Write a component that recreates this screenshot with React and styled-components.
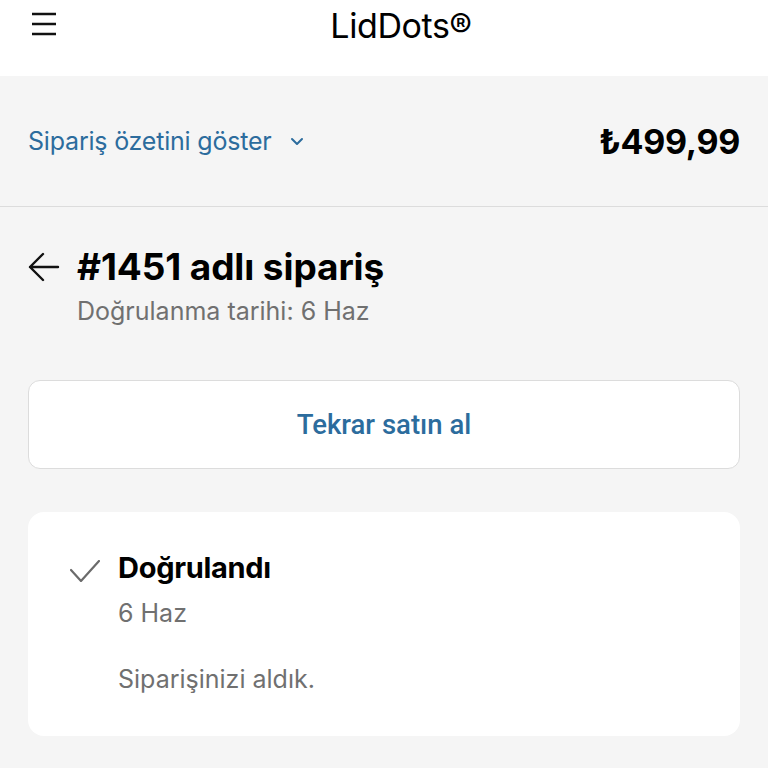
import styled, { createGlobalStyle } from 'styled-components';

const GlobalStyle = createGlobalStyle`
  html, body {
    margin: 0;
    padding: 0;
    background: #f5f5f5;
    font-family: Inter, "Noto Sans", sans-serif;
    color: #000;
  }
`;

const Header = styled.header`
  height: 76px;
  background: #fff;
  display: flex;
  align-items: flex-start;
  padding: 7px 28px 0;
  box-sizing: border-box;
`;

const Menu = styled.button`
  border: none;
  background: none;
  padding: 0;
  margin: 5px 0 0 4px;
  width: 24px;
  height: 24px;
  display: flex;
  align-items: center;
`;

const Brand = styled.div`
  flex: 1;
  text-align: center;
  font-size: 34px;
  font-weight: 400;
  letter-spacing: -0.4px;
  margin-right: 28px;
  padding-left: 34px;
  line-height: 38px;
`;

const SummaryBar = styled.div`
  height: 131px;
  display: flex;
  align-items: center;
  justify-content: space-between;
  padding: 0 28px;
  border-bottom: 1.5px solid #dcdcdc;
  box-sizing: border-box;
`;

const SummaryToggle = styled.div`
  display: flex;
  align-items: center;
  gap: 18px;
  color: #2c6c9d;
  font-size: 25px;
  letter-spacing: -0.2px;
`;

const Price = styled.div`
  font-size: 34px;
  font-weight: 700;
  letter-spacing: -0.3px;
`;

const Main = styled.main`
  padding: 40px 28px 0;
`;

const TitleRow = styled.div`
  display: flex;
  align-items: center;
  gap: 17px;
`;

const Title = styled.h1`
  margin: 0;
  font-size: 37px;
  font-weight: 700;
  letter-spacing: -0.1px;
  line-height: 40px;
`;

const Sub = styled.div`
  color: #707070;
  font-size: 25px;
  margin: ${p => p.$gap || 0}px 0 0 ${p => p.$indent || 0}px;
  line-height: 30px;
`;

const BuyAgain = styled.button`
  display: block;
  width: 100%;
  height: 89px;
  margin-top: 54px;
  background: #fff;
  border: 1.5px solid #dcdcdc;
  border-radius: 12px;
  color: #2c6c9d;
  font-family: Roboto, Inter, sans-serif;
  font-size: 27.5px;
  font-weight: 500;
`;

const Card = styled.section`
  margin-top: 43px;
  background: #fff;
  border-radius: 16px;
  padding: 36px 40px 40px 42px;
  display: flex;
  gap: 18px;
  height: 224px;
  box-sizing: border-box;
`;

const CardBody = styled.div`
  display: flex;
  flex-direction: column;
`;

const Status = styled.div`
  font-size: 29px;
  font-weight: 700;
  letter-spacing: -0.3px;
  line-height: 40px;
`;

export default function App() {
  return (
    <>
      <GlobalStyle />
      <Header>
        <Menu aria-label="menu">
          <svg width="24" height="24" viewBox="0 0 24 24">
            <path d="M0 2h24M0 12h24M0 22h24" stroke="#111" strokeWidth="2.6" />
          </svg>
        </Menu>
        <Brand>LidDots®</Brand>
      </Header>
      <SummaryBar>
        <SummaryToggle>
          Sipariş özetini göster
          <svg width="14" height="10" viewBox="0 0 14 10">
            <path d="M2 3l5 5 5-5" fill="none" stroke="#2c6c9d" strokeWidth="2" strokeLinecap="round" strokeLinejoin="round" />
          </svg>
        </SummaryToggle>
        <Price>₺499,99</Price>
      </SummaryBar>
      <Main>
        <TitleRow>
          <svg width="32" height="30" viewBox="0 0 32 30">
            <path d="M30 15H2M15 2L2 15l13 13" fill="none" stroke="#111" strokeWidth="2.4" strokeLinecap="round" strokeLinejoin="round" />
          </svg>
          <Title>#1451 adlı sipariş</Title>
        </TitleRow>
        <Sub $indent={49} $gap={9}>Doğrulanma tarihi: 6 Haz</Sub>
        <BuyAgain>Tekrar satın al</BuyAgain>
        <Card>
          <svg width="30" height="22" viewBox="0 0 30 22" style={{ marginTop: 12 }}>
            <path d="M1 10l10 11L29 1" fill="none" stroke="#6b6b6b" strokeWidth="2.2" strokeLinecap="round" strokeLinejoin="round" />
          </svg>
          <CardBody>
            <Status>Doğrulandı</Status>
            <Sub $gap={10}>6 Haz</Sub>
            <Sub $gap={36}>Siparişinizi aldık.</Sub>
          </CardBody>
        </Card>
      </Main>
    </>
  );
}
